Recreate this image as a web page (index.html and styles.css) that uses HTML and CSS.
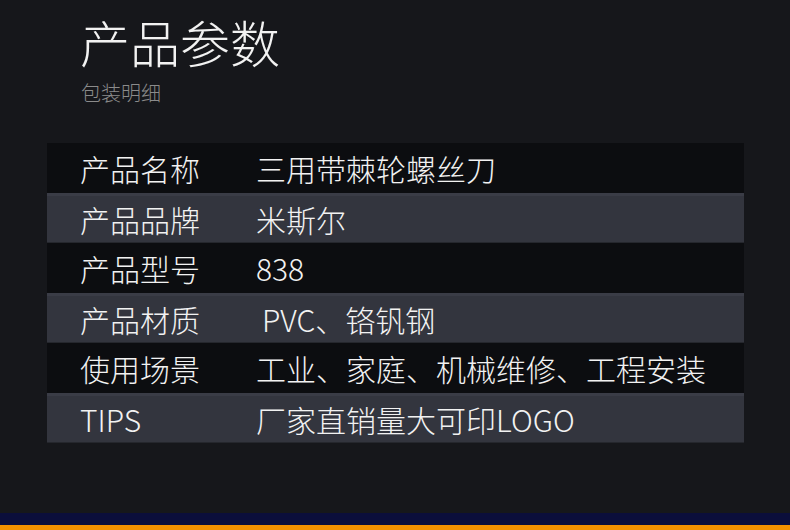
FILE: index.html
```html
<!DOCTYPE html>
<html lang="zh-CN">
<head>
<meta charset="utf-8">
<title>产品参数</title>
<link rel="stylesheet" href="styles.css">
</head>
<body>
<main class="page">
  <header class="head">
    <h1 class="title">产品参数</h1>
    <p class="subtitle">包装明细</p>
  </header>
  <div class="table">
    <div class="row dark"><span class="label">产品名称</span><span class="value">三用带棘轮螺丝刀</span></div>
    <div class="row light"><span class="label">产品品牌</span><span class="value">米斯尔</span></div>
    <div class="row dark"><span class="label">产品型号</span><span class="value">838</span></div>
    <div class="row light"><span class="label">产品材质</span><span class="value indent">PVC、铬钒钢</span></div>
    <div class="row dark"><span class="label">使用场景</span><span class="value">工业、家庭、机械维修、工程安装</span></div>
    <div class="row light"><span class="label">TIPS</span><span class="value">厂家直销量大可印LOGO</span></div>
  </div>
</main>
<footer class="foot"><div class="blue"></div><div class="orange"></div></footer>
</body>
</html>
```
FILE: styles.css
```css
html, body {
  margin: 0;
  padding: 0;
}
body {
  width: 790px;
  height: 530px;
  background: #16171b;
  display: flex;
  flex-direction: column;
  font-family: "Noto Sans CJK SC", "Noto Sans", sans-serif;
  color: #f2f2f2;
  overflow: hidden;
}
.page {
  flex: 1;
  display: flex;
  flex-direction: column;
}
.head {
  padding: 13px 0 0 80px;
  height: 143px;
  box-sizing: border-box;
}
.title {
  margin: 0;
  font-size: 50px;
  line-height: 56px;
  font-weight: 300;
  letter-spacing: 0;
}
.subtitle {
  margin: 12px 0 0 1px;
  font-size: 20px;
  line-height: 24px;
  font-weight: 300;
  color: #8b8b8b;
}
.table {
  margin-left: 47px;
  width: 697px;
  display: flex;
  flex-direction: column;
}
.row {
  height: 50px;
  display: flex;
  align-items: center;
  font-size: 30px;
  font-weight: 300;
  box-sizing: border-box;
}
.dark {
  background: #0c0d10;
}
.light {
  background: #33353e;
  border-top: 3px solid #3a3c46;
  border-bottom: 1px solid #25272d;
}
.label {
  width: 209px;
  padding-left: 33px;
  box-sizing: border-box;
  flex: none;
}
.value {
  flex: 1;
}
.indent {
  padding-left: 6px;
}
.foot {
  display: flex;
  flex-direction: column;
}
.blue {
  height: 12px;
  background: #0b0e3b;
}
.orange {
  height: 5px;
  background: #f39100;
}
```
